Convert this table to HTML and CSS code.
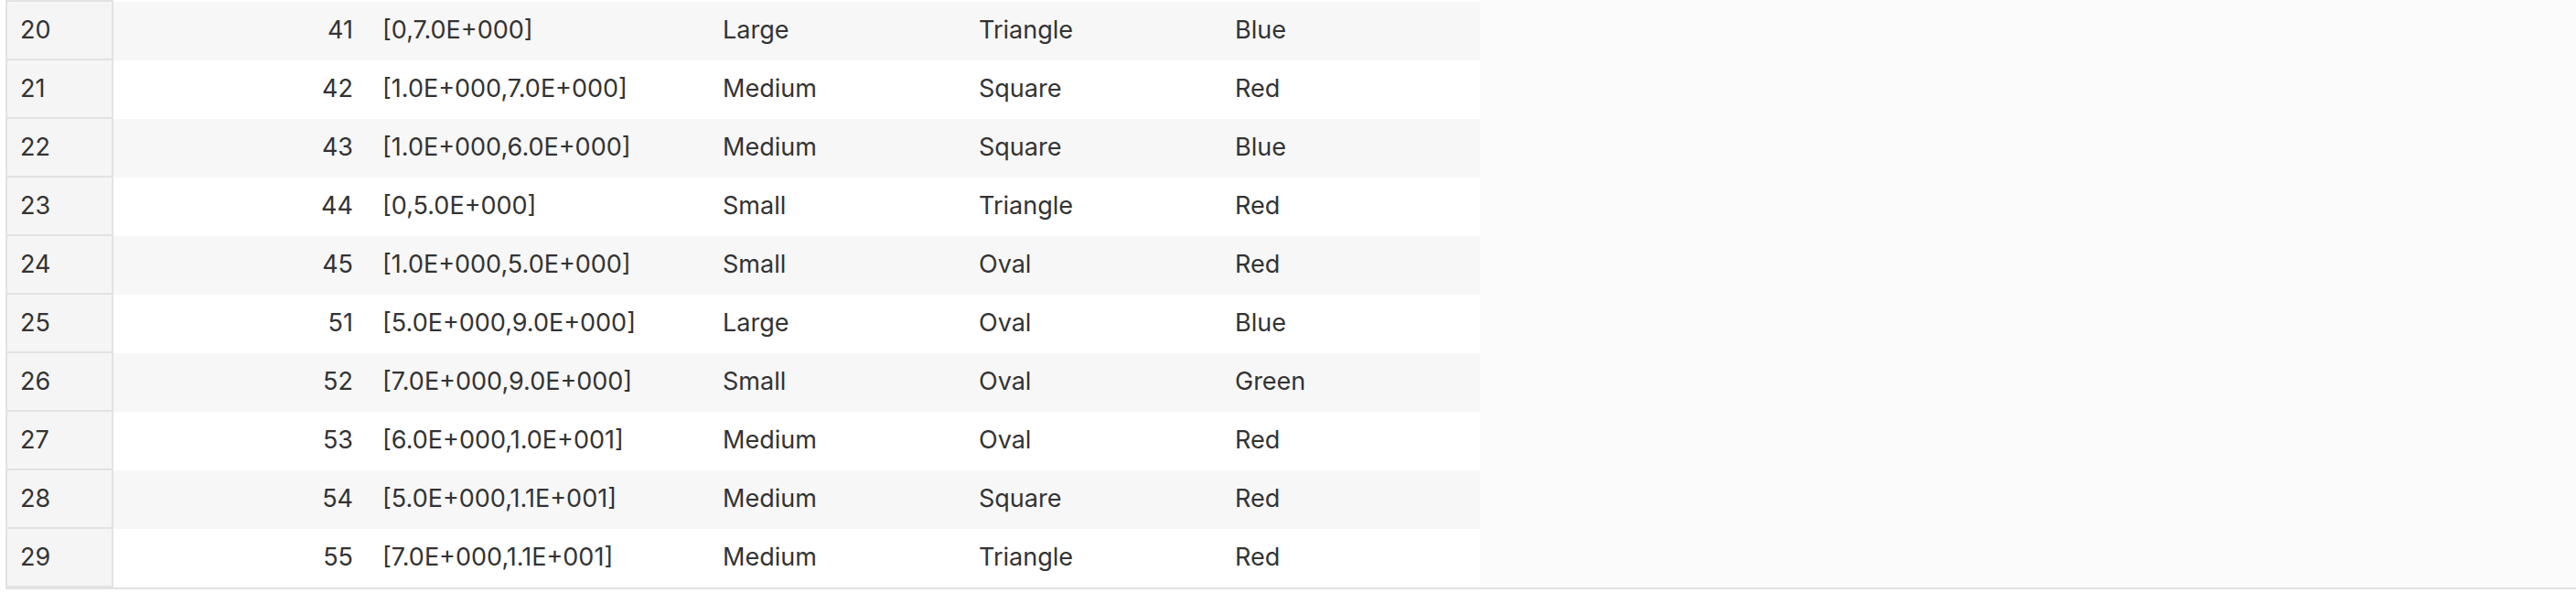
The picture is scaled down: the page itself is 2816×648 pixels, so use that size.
FILE: index.html
```html
<!DOCTYPE html>
<html lang="en">
<head>
<meta charset="utf-8">
<title>Data grid</title>
<link rel="stylesheet" href="styles.css">
</head>
<body>
<div class="frame">
  <div class="table">
    <div class="topline"><div class="topline-idx"></div><div class="topline-rest"></div></div>
    <div class="row striped"><div class="idx">20</div><div class="cell num">41</div><div class="cell interval">[0,7.0E+000]</div><div class="cell">Large</div><div class="cell">Triangle</div><div class="cell last">Blue</div></div>
    <div class="row"><div class="idx">21</div><div class="cell num">42</div><div class="cell interval">[1.0E+000,7.0E+000]</div><div class="cell">Medium</div><div class="cell">Square</div><div class="cell last">Red</div></div>
    <div class="row striped"><div class="idx">22</div><div class="cell num">43</div><div class="cell interval">[1.0E+000,6.0E+000]</div><div class="cell">Medium</div><div class="cell">Square</div><div class="cell last">Blue</div></div>
    <div class="row"><div class="idx">23</div><div class="cell num">44</div><div class="cell interval">[0,5.0E+000]</div><div class="cell">Small</div><div class="cell">Triangle</div><div class="cell last">Red</div></div>
    <div class="row striped"><div class="idx">24</div><div class="cell num">45</div><div class="cell interval">[1.0E+000,5.0E+000]</div><div class="cell">Small</div><div class="cell">Oval</div><div class="cell last">Red</div></div>
    <div class="row"><div class="idx">25</div><div class="cell num">51</div><div class="cell interval">[5.0E+000,9.0E+000]</div><div class="cell">Large</div><div class="cell">Oval</div><div class="cell last">Blue</div></div>
    <div class="row striped"><div class="idx">26</div><div class="cell num">52</div><div class="cell interval">[7.0E+000,9.0E+000]</div><div class="cell">Small</div><div class="cell">Oval</div><div class="cell last">Green</div></div>
    <div class="row"><div class="idx">27</div><div class="cell num">53</div><div class="cell interval">[6.0E+000,1.0E+001]</div><div class="cell">Medium</div><div class="cell">Oval</div><div class="cell last">Red</div></div>
    <div class="row striped"><div class="idx">28</div><div class="cell num">54</div><div class="cell interval">[5.0E+000,1.1E+001]</div><div class="cell">Medium</div><div class="cell">Square</div><div class="cell last">Red</div></div>
    <div class="row"><div class="idx">29</div><div class="cell num">55</div><div class="cell interval">[7.0E+000,1.1E+001]</div><div class="cell">Medium</div><div class="cell">Triangle</div><div class="cell last">Red</div></div>
  </div>
  <div class="filler"></div>
</div>
</body>
</html>
```

FILE: styles.css
```css
html, body {
  margin: 0;
  padding: 0;
  background: #ffffff;
}

body {
  font-family: Inter, "Noto Sans", "Liberation Sans", sans-serif;
  font-size: 27px;
  color: #333333;
}

.frame {
  display: flex;
  margin-left: 6px;
  border-left: 2px solid #e2e2e2;
  border-bottom: 2px solid #e2e2e2;
  box-sizing: border-box;
  height: 644px;
}

.table {
  display: flex;
  flex-direction: column;
  width: 1610px;
  flex: none;
  background: #ffffff;
}

.topline {
  display: flex;
  height: 2px;
}

.topline-idx {
  width: 116px;
  background: #e2e2e2;
}

.topline-rest {
  flex: 1;
  background: #ffffff;
}

.row {
  display: flex;
  height: 64px;
  background: #ffffff;
}

.row.striped {
  background: #f7f7f7;
}

.idx {
  flex: none;
  width: 116px;
  box-sizing: border-box;
  background: #f5f5f5;
  border-right: 2px solid #e2e2e2;
  border-bottom: 2px solid #e2e2e2;
  padding-left: 14px;
  padding-bottom: 2px;
  display: flex;
  align-items: center;
}

.cell {
  width: 280px;
  flex: none;
  box-sizing: border-box;
  padding: 0 16px 4px;
  display: flex;
  align-items: center;
  white-space: nowrap;
}

.cell.num {
  width: 278px;
  justify-content: flex-end;
}

.cell.interval {
  width: 372px;
}

.cell.last {
  width: 284px;
}

.filler {
  flex: 1;
  background: #fbfbfb;
}
```
